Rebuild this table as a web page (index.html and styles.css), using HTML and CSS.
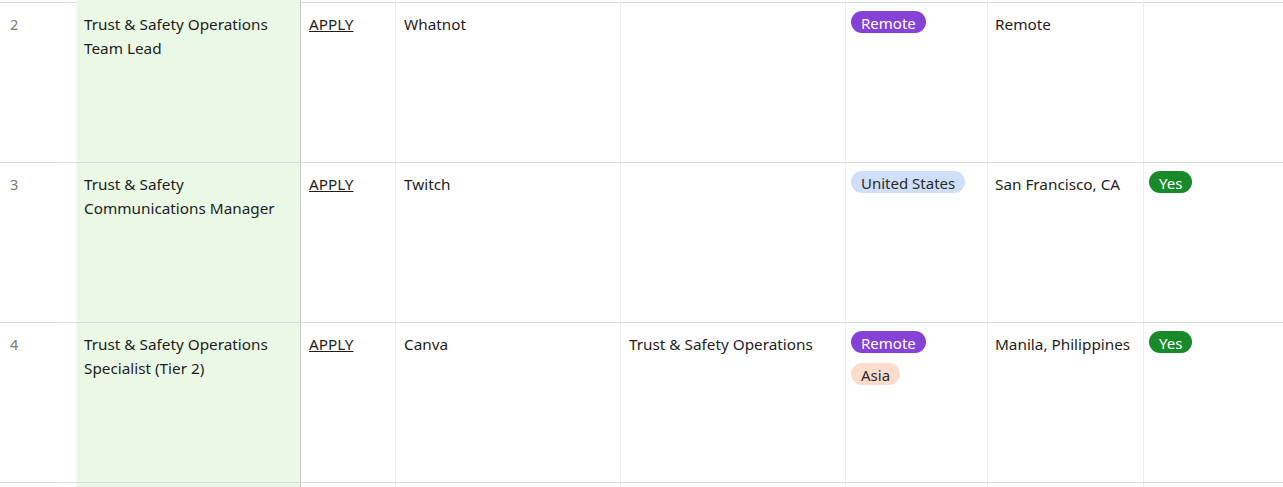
FILE: index.html
```html
<!DOCTYPE html>
<html>
<head>
<meta charset="utf-8">
<link rel="stylesheet" href="styles.css">
</head>
<body>
<div class="sheet">
  <div class="row row-cut-top">
    <div class="cell num"></div><div class="cell title"></div><div class="cell"></div><div class="cell"></div><div class="cell"></div><div class="cell"></div><div class="cell"></div><div class="cell last"></div>
  </div>
  <div class="row">
    <div class="cell num">2</div>
    <div class="cell title">Trust &amp; Safety Operations Team Lead</div>
    <div class="cell"><a class="apply" href="#">APPLY</a></div>
    <div class="cell">Whatnot</div>
    <div class="cell"></div>
    <div class="cell tags"><span class="pill pill-remote">Remote</span></div>
    <div class="cell loc">Remote</div>
    <div class="cell last"></div>
  </div>
  <div class="row">
    <div class="cell num">3</div>
    <div class="cell title">Trust &amp; Safety Communications Manager</div>
    <div class="cell"><a class="apply" href="#">APPLY</a></div>
    <div class="cell">Twitch</div>
    <div class="cell"></div>
    <div class="cell tags"><span class="pill pill-us">United States</span></div>
    <div class="cell loc">San Francisco, CA</div>
    <div class="cell last"><span class="pill pill-yes">Yes</span></div>
  </div>
  <div class="row">
    <div class="cell num">4</div>
    <div class="cell title">Trust &amp; Safety Operations Specialist (Tier 2)</div>
    <div class="cell"><a class="apply" href="#">APPLY</a></div>
    <div class="cell">Canva</div>
    <div class="cell">Trust &amp; Safety Operations</div>
    <div class="cell tags"><span class="pill pill-remote">Remote</span><span class="pill pill-asia">Asia</span></div>
    <div class="cell loc">Manila, Philippines</div>
    <div class="cell last"><span class="pill pill-yes">Yes</span></div>
  </div>
  <div class="row">
    <div class="cell num"></div><div class="cell title"></div><div class="cell"></div><div class="cell"></div><div class="cell"></div><div class="cell"></div><div class="cell"></div><div class="cell last"></div>
  </div>
</div>
</body>
</html>
```
FILE: styles.css
```css
html, body {
  margin: 0;
  padding: 0;
  background: #ffffff;
}
.sheet {
  height: 487px;
  overflow: hidden;
  font-family: "Noto Sans", "Open Sans", sans-serif;
  font-size: 15.3px;
  line-height: 24px;
  color: #1e1e1e;
}
.row {
  display: grid;
  grid-template-columns: 77px 224px 95px 225px 225px 142px 156px 139px;
  height: 160px;
  border-bottom: 1px solid #dcdcdc;
  box-sizing: border-box;
}
.row-cut-top {
  height: 3px;
}
.cell {
  border-right: 1px solid #ededed;
  padding: 9px 8px 0 8px;
  box-sizing: border-box;
  min-width: 0;
  overflow: hidden;
}
.cell.last {
  border-right: none;
  padding-left: 5px;
  padding-top: 8px;
}
.num {
  color: #7a7a7a;
  font-size: 14.5px;
  padding-left: 10px;
  border-right: 1px solid #f8f8f8;
}
.title {
  background: #eaf8e6;
  border-right: 1px solid #c4c4c4;
  padding-left: 7px;
}
.loc {
  padding-left: 7px;
}
.apply {
  color: #1e1e1e;
  text-decoration: underline;
}
.tags {
  display: flex;
  flex-direction: column;
  align-items: flex-start;
  gap: 10px;
  padding-left: 5px;
  padding-top: 8px;
}
.pill {
  display: inline-block;
  box-sizing: border-box;
  height: 22px;
  line-height: 19px;
  padding: 3px 10px 0 10px;
  border-radius: 11px;
  font-size: 15px;
}
.pill-remote {
  background: #8541d8;
  color: #ffffff;
}
.pill-us {
  background: #cfdffa;
  color: #2a2a2a;
}
.pill-asia {
  background: #fddccc;
  color: #2a2a2a;
}
.pill-yes {
  background: #188a28;
  color: #ffffff;
}
```
